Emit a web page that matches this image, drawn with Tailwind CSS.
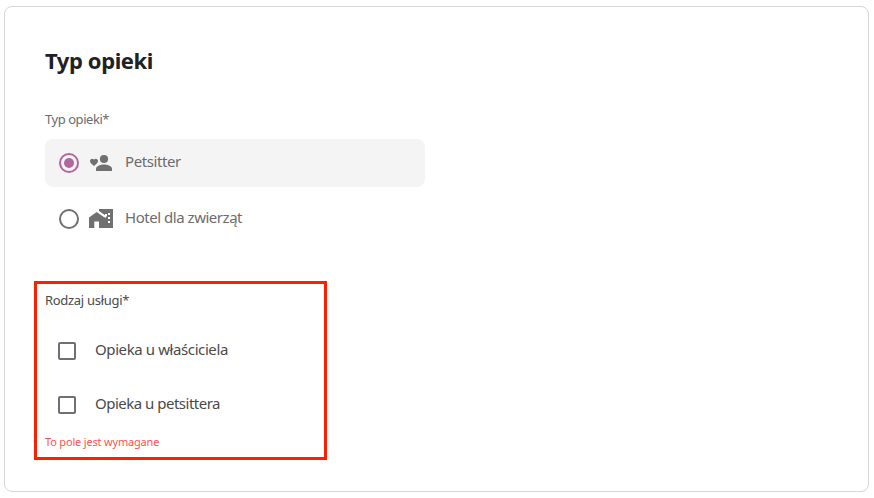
<!DOCTYPE html>
<html lang="pl">
<head>
  <meta charset="UTF-8">
  <meta name="viewport" content="width=device-width, initial-scale=1.0">
  <title>Typ opieki</title>
  <script src="https://cdn.jsdelivr.net/npm/@tailwindcss/browser@4"></script>
</head>
<body class="bg-white font-['Noto_Sans',sans-serif] h-[498px] overflow-hidden pt-[6px] pl-[4px] pr-[5px]">
  <main class="h-[486px] rounded-lg border border-[#d6d6d6] pl-[29px]">
    <h1 class="ml-[11px] mt-[37px] text-[22px] leading-8 font-bold tracking-[-0.4px] text-[#202122]"><span>Typ opieki</span></h1>

    <section class="ml-[11px] mt-[33px] text-[#6c6c6c]">
      <p class="text-[13px] leading-5 tracking-[-0.45px]"><span>Typ opieki*</span></p>
      <label class="mt-[10px] flex h-12 w-[380px] items-center rounded-lg bg-[#f4f4f4] pl-[14px]">
        <input type="radio" name="type" class="sr-only" checked>
        <svg class="size-5 shrink-0" viewBox="0 0 20 20" fill="none">
          <circle cx="10" cy="10" r="9" stroke="#b0689c" stroke-width="2"/>
          <circle cx="10" cy="10" r="5" fill="#b0689c"/>
        </svg>
        <svg class="ml-[10px] h-5 w-6 shrink-0" viewBox="0 0 24 20" fill="#707070">
          <circle cx="15" cy="6" r="4.1"/>
          <path d="M7 18v-2.300c0-2.800 5.300-4.200 8-4.200s8 1.400 8 4.200V18z"/>
          <path d="M5 13.1l-.6-.5C2.3 10.7 1 9.5 1 8c0-1.2 1-2.2 2.2-2.2.7 0 1.4.3 1.8.9.4-.6 1.1-.9 1.8-.9C8 5.8 9 6.8 9 8c0 1.5-1.3 2.7-3.4 4.6z"/>
        </svg>
        <span class="ml-3 -mt-[4px] text-[15px] leading-6 tracking-[-0.4px]"><span>Petsitter</span></span>
      </label>
      <label class="mt-2 flex h-12 w-[380px] items-center pl-[14px]">
        <input type="radio" name="type" class="sr-only">
        <svg class="size-5 shrink-0" viewBox="0 0 20 20" fill="none">
          <circle cx="10" cy="10" r="9" stroke="#707070" stroke-width="2"/>
        </svg>
        <svg class="ml-[10px] h-5 w-6 shrink-0" viewBox="0 0 24 20" fill="#707070">
          <!-- tower, then the house in front of it -->
          <path d="M10 0H24V19H15V8L17 9V7.5H18V5H16V6.3L10 2z"/>
          <path d="M0 19V8.5L7.700 3L15.5 8.5V19H10V12.5H5.3V19z"/>
          <path fill="#fff" d="M19 4h2v2h-2zM19 8h2v2h-2zM19 12h2v2h-2z"/>
        </svg>
        <span class="ml-3 -mt-[4px] text-[15px] leading-6 tracking-[-0.47px]"><span>Hotel dla zwierząt</span></span>
      </label>
    </section>

    <section class="mt-[38px] h-[179px] w-[293px] border-3 border-[#ff1e00] pl-2 text-[#4a4a4a]">
      <p class="mt-[6px] text-[13px] leading-5 tracking-[-0.3px]"><span>Rodzaj usługi*</span></p>
      <label class="mt-[18px] flex h-[46px] items-center pl-[13px]">
        <input type="checkbox" class="size-[18px] shrink-0 appearance-none rounded-[2px] border-2 border-[#707070]">
        <span class="ml-[19px] -mt-[5px] text-[15px] leading-6 tracking-[-0.4px]"><span>Opieka u właściciela</span></span>
      </label>
      <label class="mt-2 flex h-[46px] items-center pl-[13px]">
        <input type="checkbox" class="size-[18px] shrink-0 appearance-none rounded-[2px] border-2 border-[#707070]">
        <span class="ml-[19px] -mt-[5px] text-[15px] leading-6 tracking-[-0.5px]"><span>Opieka u petsittera</span></span>
      </label>
      <p class="mt-[6px] text-[11px] leading-4 tracking-[-0.18px] text-[#ff5252]"><span>To pole jest wymagane</span></p>
    </section>
  </main>
</body>
</html>
